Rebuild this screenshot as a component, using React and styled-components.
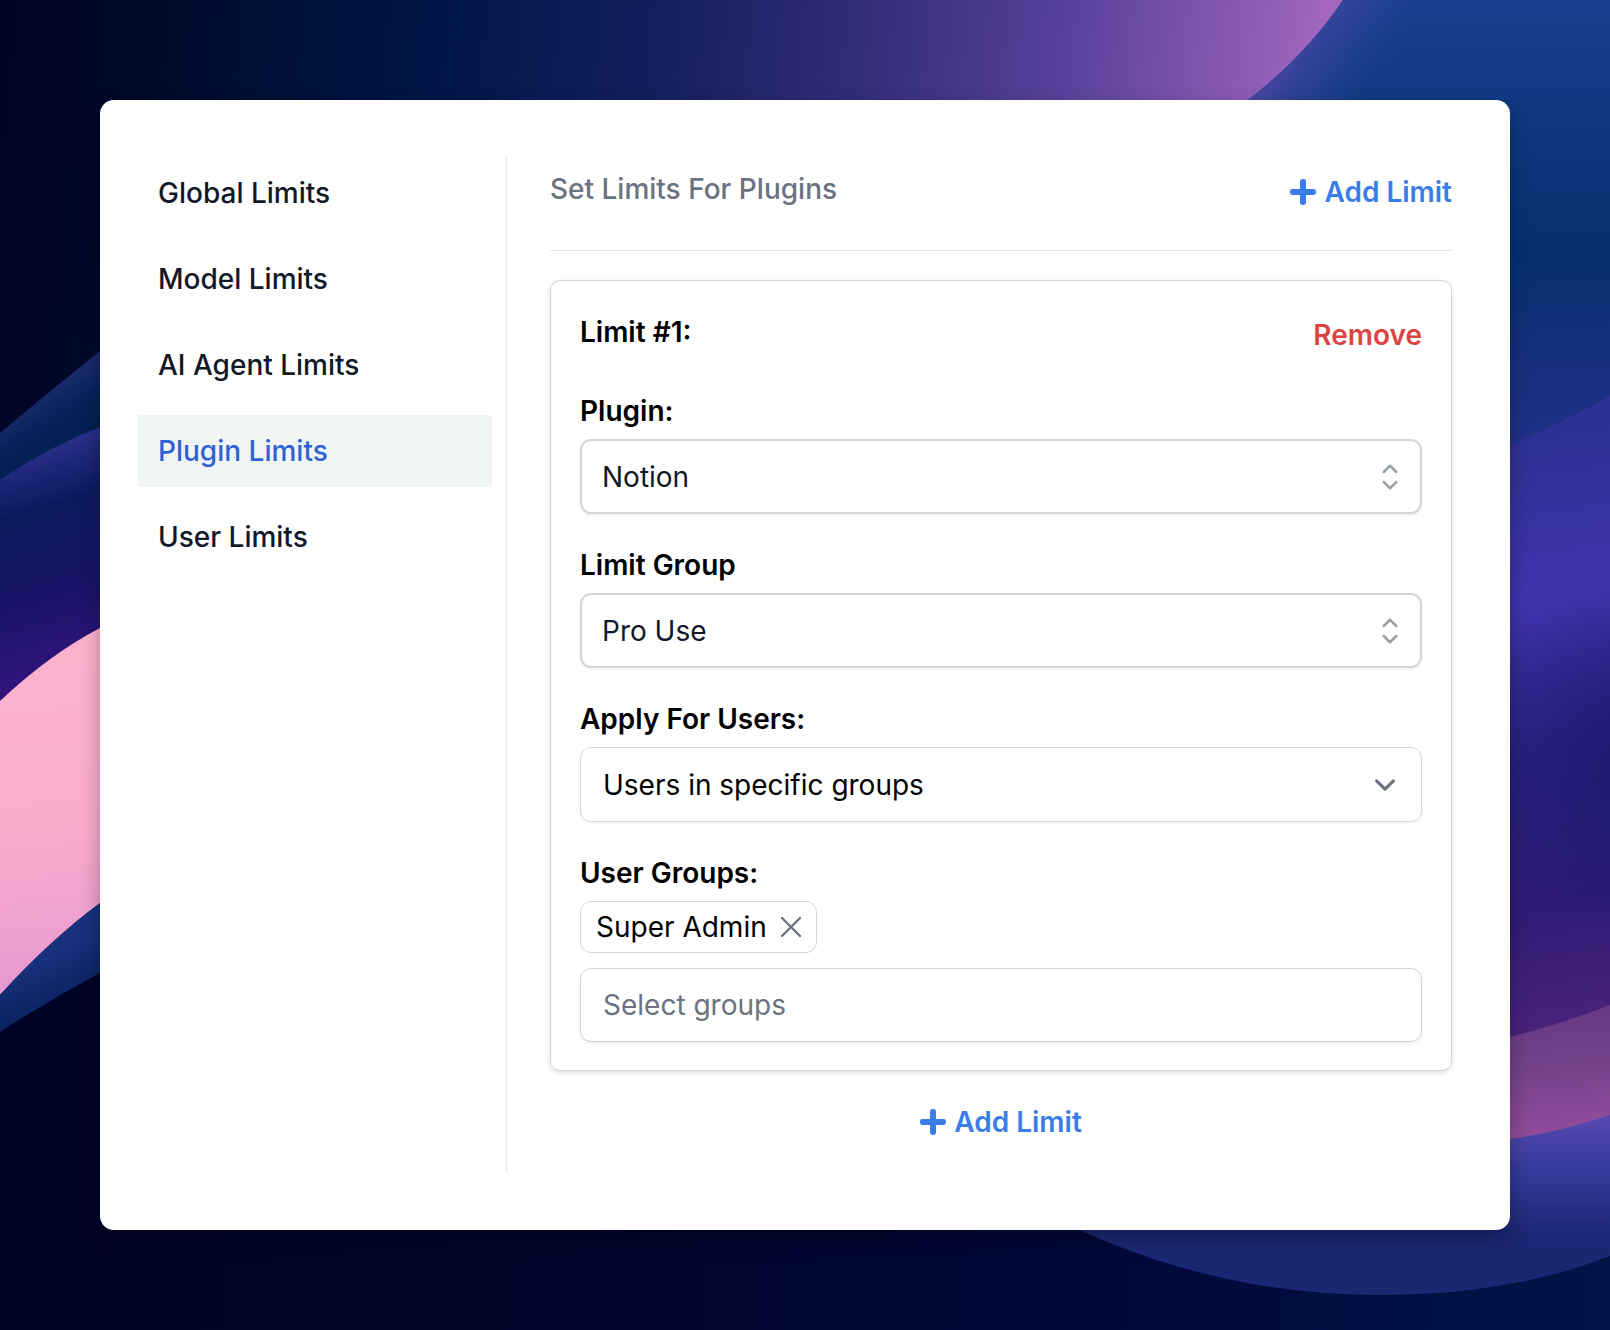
import React, { useState } from "react";
import styled, { createGlobalStyle } from "styled-components";

const navItems = ["Global Limits", "Model Limits", "AI Agent Limits", "Plugin Limits", "User Limits"];

const App = () => {
  const [active, setActive] = useState("Plugin Limits");
  const [groups, setGroups] = useState(["Super Admin"]);

  const onNavClick = (item) => (e) => {
    e.preventDefault();
    setActive(item);
  };

  const onRemoveGroup = (group) => () => setGroups(groups.filter((g) => g !== group));

  return (
    <Page>
      <GlobalStyle />
      <Wallpaper />
      <Panel>
        <Nav>
          {navItems.map((item) => (
            <NavLink key={item} href="#" $active={item === active} onClick={onNavClick(item)}>
              {item}
            </NavLink>
          ))}
        </Nav>
        <Main>
          <Header>
            <Title>Set Limits For Plugins</Title>
            <AddLimit />
          </Header>
          <Card>
            <CardHeader>
              <CardTitle>Limit #1:</CardTitle>
              <TextButton type="button" $color="#dc4444">Remove</TextButton>
            </CardHeader>
            <Fields>
              <SelectField id="plugin" label="Plugin:" options={["Notion"]} />
              <SelectField id="limit-group" label="Limit Group" options={["Pro Use"]} />
              <SelectField id="apply-for" label="Apply For Users:" options={["Users in specific groups"]} native />
              <Field>
                <Label htmlFor="user-groups">User Groups:</Label>
                <GroupPicker>
                  {groups.map((group) => (
                    <Chip key={group}>
                      {group}
                      <ChipButton type="button" aria-label={`Remove ${group}`} onClick={onRemoveGroup(group)}>
                        <svg width="20" height="22" viewBox="0 0 20 22" fill="none" stroke="currentColor" strokeWidth="2.4" strokeLinecap="round">
                          <path d="M1 2l18 18M19 2L1 20" />
                        </svg>
                      </ChipButton>
                    </Chip>
                  ))}
                  <TextInput id="user-groups" type="text" placeholder="Select groups" />
                </GroupPicker>
              </Field>
            </Fields>
          </Card>
          <Footer>
            <AddLimit />
          </Footer>
        </Main>
      </Panel>
    </Page>
  );
};

const AddLimit = () => (
  <TextButton type="button" $color="#3b7de6">
    <svg width="26" height="26" viewBox="0 0 26 26" fill="currentColor">
      <rect x="10" width="6" height="26" rx="2.4" />
      <rect y="10" width="26" height="6" rx="2.4" />
    </svg>
    Add Limit
  </TextButton>
);

const SelectField = ({ id, label, options, native }) => (
  <Field>
    <Label htmlFor={id}>{label}</Label>
    <SelectBox>
      <Select id={id} $native={native}>
        {options.map((option) => (
          <option key={option}>{option}</option>
        ))}
      </Select>
      <SelectIcon $native={native}>
        {native ? (
          <svg width="42" height="42" viewBox="0 0 20 20" fill="none" stroke="currentColor" strokeWidth="1.5" strokeLinecap="round" strokeLinejoin="round">
            <path d="M6 8l4 4 4-4" />
          </svg>
        ) : (
          <svg width="40" height="40" viewBox="0 0 24 24" fill="none" stroke="currentColor" strokeWidth="1.5" strokeLinecap="round" strokeLinejoin="round">
            <path d="M8.25 15 12 18.75 15.75 15m-7.5-6L12 5.25 15.75 9" />
          </svg>
        )}
      </SelectIcon>
    </SelectBox>
  </Field>
);

const Wallpaper = () => (
  <WallpaperSvg viewBox="0 0 1610 1330" preserveAspectRatio="none" aria-hidden="true">
    <defs>
      <linearGradient id="sky" gradientUnits="userSpaceOnUse" x1="0" y1="0" x2="1330" y2="140">
        <stop offset="0" stopColor="#000326" />
        <stop offset="0.12" stopColor="#000b2c" />
        <stop offset="0.32" stopColor="#001646" />
        <stop offset="0.5" stopColor="#15205f" />
        <stop offset="0.66" stopColor="#362f7e" />
        <stop offset="0.8" stopColor="#5a429d" />
        <stop offset="0.92" stopColor="#8759b4" />
        <stop offset="1" stopColor="#a869bf" />
      </linearGradient>
      <linearGradient id="blue" x1="0" y1="0" x2="0" y2="1">
        <stop offset="0" stopColor="#17408f" />
        <stop offset="0.55" stopColor="#06306f" />
        <stop offset="1" stopColor="#23308a" />
      </linearGradient>
      <linearGradient id="edge" gradientUnits="userSpaceOnUse" x1="1290" y1="45" x2="1370" y2="95">
        <stop offset="0" stopColor="#4345a0" />
        <stop offset="1" stopColor="#2b4297" stopOpacity="0" />
      </linearGradient>
      <linearGradient id="violet" gradientUnits="userSpaceOnUse" x1="1510" y1="430" x2="1590" y2="1030">
        <stop offset="0" stopColor="#2c3192" />
        <stop offset="0.28" stopColor="#4034ae" />
        <stop offset="0.52" stopColor="#2f2587" />
        <stop offset="0.78" stopColor="#2f1b76" />
        <stop offset="1" stopColor="#4a237d" />
      </linearGradient>
      <radialGradient id="shade" gradientUnits="userSpaceOnUse" cx="1640" cy="760" r="180">
        <stop offset="0" stopColor="#15186a" stopOpacity="0.8" />
        <stop offset="1" stopColor="#15186a" stopOpacity="0" />
      </radialGradient>
      <linearGradient id="mauve" gradientUnits="userSpaceOnUse" x1="1540" y1="1020" x2="1555" y2="1140">
        <stop offset="0" stopColor="#693b84" />
        <stop offset="0.4" stopColor="#75428a" />
        <stop offset="1" stopColor="#954d9d" />
      </linearGradient>
      <linearGradient id="swell" gradientUnits="userSpaceOnUse" x1="0" y1="1120" x2="0" y2="1296">
        <stop offset="0" stopColor="#5548ae" />
        <stop offset="0.3" stopColor="#343a9a" />
        <stop offset="0.65" stopColor="#1c2775" />
        <stop offset="1" stopColor="#182871" />
      </linearGradient>
      <linearGradient id="deep" gradientUnits="userSpaceOnUse" x1="0" y1="0" x2="1610" y2="0">
        <stop offset="0" stopColor="#000226" />
        <stop offset="0.3" stopColor="#00062a" />
        <stop offset="0.65" stopColor="#000738" />
        <stop offset="1" stopColor="#001448" />
      </linearGradient>
      <linearGradient id="ridge" gradientUnits="userSpaceOnUse" x1="40" y1="396" x2="75" y2="450">
        <stop offset="0" stopColor="#1b2a6c" />
        <stop offset="0.4" stopColor="#06235b" />
        <stop offset="1" stopColor="#021e50" />
      </linearGradient>
      <linearGradient id="indigo" gradientUnits="userSpaceOnUse" x1="30" y1="455" x2="90" y2="660">
        <stop offset="0" stopColor="#262e86" />
        <stop offset="0.25" stopColor="#0b1a60" />
        <stop offset="0.6" stopColor="#161466" />
        <stop offset="1" stopColor="#30147a" />
      </linearGradient>
      <linearGradient id="pink" gradientUnits="userSpaceOnUse" x1="0" y1="650" x2="30" y2="990">
        <stop offset="0" stopColor="#fcb2cd" />
        <stop offset="0.55" stopColor="#f9abcd" />
        <stop offset="1" stopColor="#e799d0" />
      </linearGradient>
      <linearGradient id="foot" gradientUnits="userSpaceOnUse" x1="40" y1="960" x2="60" y2="1005">
        <stop offset="0" stopColor="#17317d" />
        <stop offset="1" stopColor="#0a2260" />
      </linearGradient>
    </defs>
    <rect width="1610" height="1330" fill="url(#sky)" />
    <path d="M1343 0Q1306 55 1248 100L1200 460H1610V0Z" fill="url(#blue)" />
    <path d="M1343 0Q1306 55 1248 100H1450V0Z" fill="url(#edge)" />
    <path d="M1400 480Q1520 450 1610 395V1060H1400Z" fill="url(#violet)" />
    <rect x="1440" y="560" width="170" height="400" fill="url(#shade)" />
    <path d="M1400 1058Q1510 1044 1610 1005V1160H1400Z" fill="url(#mauve)" />
    <path d="M0 970H1400V1200H1610V1330H0Z" fill="url(#deep)" />
    <path d="M1020 1200Q1190 1295 1380 1295Q1510 1295 1610 1256V1115Q1560 1132 1510 1139Q1300 1160 1020 1200Z" fill="url(#swell)" />
    <path d="M0 433Q50 391 100 351V500H0Z" fill="url(#ridge)" />
    <path d="M0 480Q50 446 100 427V720H0Z" fill="url(#indigo)" />
    <path d="M0 701Q50 654 100 628V903Q50 940 0 995Z" fill="url(#pink)" />
    <path d="M0 995Q50 940 100 903V973Q50 1000 0 1032Z" fill="url(#foot)" />
    <path d="M0 1032Q50 1000 100 973V1330H0Z" fill="url(#deep)" />
  </WallpaperSvg>
);

const GlobalStyle = createGlobalStyle`
  *, *::before, *::after {
    box-sizing: border-box;
  }

  body {
    margin: 0;
    background: #000728;
    color: #000;
    font-family: Inter, "Liberation Sans", sans-serif;
    font-size: 28px;
    line-height: 40px;
  }

  button, input, select {
    font: inherit;
    color: inherit;
  }
`;

const Page = styled.div`
  position: relative;
  display: flex;
  min-height: 100vh;
  padding: 100px;
`;

const WallpaperSvg = styled.svg`
  position: absolute;
  inset: 0;
  width: 100%;
  height: 100%;
`;

const Panel = styled.div`
  position: relative;
  display: flex;
  flex: 1;
  min-width: 0;
  padding: 57px 58px 58px 38px;
  background: #fff;
  border-radius: 14px;
  box-shadow: 0 8px 20px rgba(0, 0, 0, 0.3);
`;

const Nav = styled.nav`
  display: flex;
  flex-direction: column;
  flex: 0 0 369px;
  gap: 14px;
  padding-right: 14px;
  border-right: 1px solid #e5e7eb;
`;

const NavLink = styled.a`
  padding: 16px 20px;
  border-radius: 2px;
  color: ${({ $active }) => ($active ? "#2f62d4" : "#111827")};
  background: ${({ $active }) => ($active ? "#f1f4f5" : "transparent")};
  font-weight: 500;
  text-decoration: none;
`;

const Main = styled.main`
  flex: 1;
  min-width: 0;
  padding: 12px 0 0 43px;
`;

const Header = styled.header`
  display: flex;
  justify-content: space-between;
  align-items: flex-start;
  padding-bottom: 35px;
  border-bottom: 1px solid #e5e7eb;
`;

const Title = styled.h1`
  margin: 0;
  color: #6b7280;
  font-size: 28px;
  font-weight: 500;
`;

const TextButton = styled.button`
  display: inline-flex;
  align-items: center;
  gap: 8px;
  padding: 3px 0;
  border: 0;
  background: none;
  color: ${({ $color }) => $color};
  font-weight: 600;
  cursor: pointer;
`;

const Card = styled.section`
  margin-top: 29px;
  padding: 31px 29px 28px;
  border: 1px solid #d1d5db;
  border-radius: 10px;
  box-shadow: 0 2px 5px rgba(0, 0, 0, 0.12);
`;

const CardHeader = styled.div`
  display: flex;
  justify-content: space-between;
  align-items: flex-start;
  margin-bottom: 33px;
`;

const CardTitle = styled.h2`
  margin: 0;
  font-size: 28px;
  font-weight: 600;
`;

const Fields = styled.div`
  display: flex;
  flex-direction: column;
  gap: 31px;
`;

const Field = styled.div`
  display: flex;
  flex-direction: column;
  gap: 8px;
`;

const Label = styled.label`
  font-weight: 600;
`;

const SelectBox = styled.div`
  position: relative;
`;

const Select = styled.select`
  display: block;
  width: 100%;
  height: 75px;
  padding: 0 80px 0 ${({ $native }) => ($native ? 22 : 20)}px;
  border: ${({ $native }) => ($native ? 1 : 2)}px solid #d3d7da;
  border-radius: 11px;
  background: #fff;
  color: ${({ $native }) => ($native ? "#000" : "#111827")};
  box-shadow: 0 2px 3px rgba(0, 0, 0, 0.05);
  appearance: none;
`;

const SelectIcon = styled.span`
  position: absolute;
  top: 0;
  bottom: 0;
  right: ${({ $native }) => ($native ? 16 : 12)}px;
  display: flex;
  align-items: center;
  color: ${({ $native }) => ($native ? "#6b7280" : "#9ca0a8")};
  pointer-events: none;
`;

const GroupPicker = styled.div`
  display: flex;
  flex-direction: column;
  align-items: flex-start;
  gap: 15px;
`;

const Chip = styled.span`
  display: inline-flex;
  align-items: center;
  gap: 14px;
  padding: 5px 15px;
  border: 1px solid #d1d5db;
  border-radius: 11px;
`;

const ChipButton = styled.button`
  display: flex;
  padding: 0;
  border: 0;
  background: none;
  color: #6b7280;
  cursor: pointer;
`;

const TextInput = styled.input`
  width: 100%;
  height: 74px;
  padding: 0 22px;
  border: 1px solid #d1d5db;
  border-radius: 11px;
  box-shadow: 0 2px 3px rgba(0, 0, 0, 0.05);

  &::placeholder {
    color: #6b7280;
    opacity: 1;
  }
`;

const Footer = styled.footer`
  display: flex;
  justify-content: center;
  margin-top: 28px;
`;

export default App;
